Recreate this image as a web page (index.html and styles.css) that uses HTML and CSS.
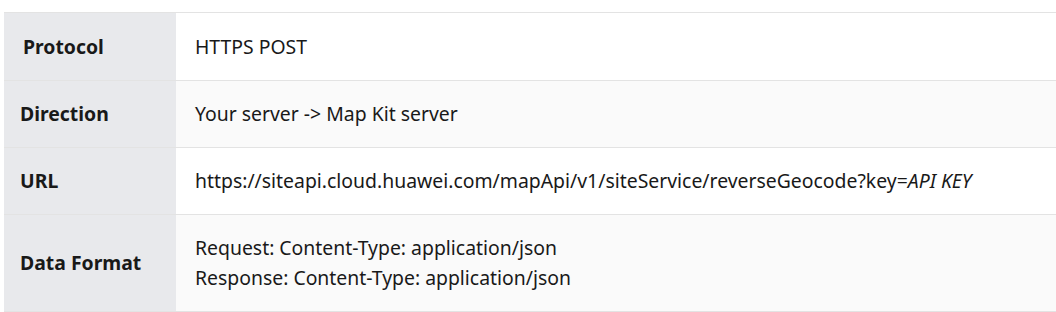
FILE: index.html
```html
<!DOCTYPE html>
<html lang="en">
<head>
  <meta charset="UTF-8" />
  <title>Reverse Geocoding | Map Kit</title>
  <link rel="stylesheet" href="styles.css">
</head>
<body>
  <table class="spec">
    <tr class="head">
      <th>Protocol</th>
      <td>HTTPS POST</td>
    </tr>
    <tr class="alt">
      <th>Direction</th>
      <td>Your server -&gt; Map Kit server</td>
    </tr>
    <tr>
      <th>URL</th>
      <td>https://siteapi.cloud.huawei.com/mapApi/v1/siteService/reverseGeocode?key=<em>API KEY</em></td>
    </tr>
    <tr class="alt">
      <th>Data Format</th>
      <td>Request: Content-Type: application/json<br>Response: Content-Type: application/json</td>
    </tr>
  </table>
</body>
</html>
```

FILE: styles.css
```css
:root {
  --label-bg: #e8e9ec;
  --alt-bg: #fafafa;
  --line: #e3e3e3;
  --text: #191919;
}
* {
  box-sizing: border-box;
}
html, body {
  overflow: hidden;
}
body {
  margin: 12px 0 0 4px;
  background: #ffffff;
  font-family: 'Noto Sans', sans-serif;
  color: var(--text);
}
.spec {
  width: 1080px;
  border-collapse: collapse;
  font-size: 19.4px;
  line-height: 30px;
}
.spec tr {
  border-top: 1px solid var(--line);
  border-bottom: 1px solid var(--line);
}
.spec tr.alt td {
  background: var(--alt-bg);
}
.spec th {
  width: 172px;
  padding: 18px 16px;
  background: var(--label-bg);
  text-align: left;
  font-weight: 700;
}
.spec tr.head th {
  padding-left: 19px;
}
.spec tr.head th,
.spec tr.head td {
  padding-top: 19px;
}
.spec td {
  padding: 18px 19px;
  font-weight: 400;
}
```
